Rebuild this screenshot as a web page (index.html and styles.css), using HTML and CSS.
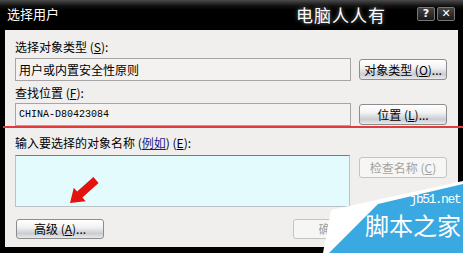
FILE: index.html
```html
<!DOCTYPE html>
<html lang="zh-CN">
<head>
<meta charset="UTF-8">
<title>选择用户</title>
<link rel="stylesheet" href="styles.css">
</head>
<body>

<div class="window">
  <div class="titlebar">
    <span class="title">选择用户</span>
    <span class="brand">电脑人人有</span>
    <span class="tbtn">?</span>
    <span class="tbtn">✕</span>
  </div>

  <div class="panel">
    <div class="label">选择对象类型 (<u>S</u>):</div>
    <div class="row">
      <div class="field">用户或内置安全性原则</div>
      <button class="btn">对象类型 (<u>O</u>)...</button>
    </div>

    <div class="label label-2">查找位置 (<u>F</u>):</div>
    <div class="row">
      <div class="field mono">CHINA-D80423084</div>
      <button class="btn">位置 (<u>L</u>)...</button>
    </div>

    <div class="label label-3">输入要选择的对象名称 (<a href="#">例如</a>) (<u>E</u>):</div>
    <div class="row row-top">
      <div class="names"></div>
      <button class="btn off">检查名称 (<u>C</u>)</button>
    </div>

    <div class="footer">
      <button class="btn">高级 (<u>A</u>)...</button>
      <div class="spacer"></div>
      <button class="btn off small">确定</button>
      <!-- cancel button sits under the watermark, its label never shows -->
      <button class="btn off small"></button>
    </div>
  </div>

  <!-- annotations drawn over the screenshot -->
  <div class="redline"></div>
  <svg class="arrow" width="40" height="36" viewBox="0 0 40 36">
    <polygon points="8,31 23.7,29.2 20.4,25.4 36.6,11 31.4,5 15.1,19.4 11.8,15.7" fill="#e4120f"/>
  </svg>
  <div class="stamp">
    <svg width="145" height="73" viewBox="0 0 145 73">
      <polygon points="5,73 13,30 145,1 145,73" fill="#fff"/>
      <polygon points="11,73 60,24 145,4 145,73" fill="#3aa9e2"/>
    </svg>
    <span class="stamp-url">jb51.net</span>
    <span class="stamp-name">脚本之家</span>
  </div>
</div>

</body>
</html>
```

FILE: styles.css
```css
* { margin: 0; padding: 0; box-sizing: border-box; }
body { background: #000; font-family: "Noto Sans CJK SC", "Noto Sans", sans-serif; font-size: 12px; color: #000; }

.window { position: relative; width: 463px; height: 253px; display: flex; flex-direction: column; padding-bottom: 6px; overflow: hidden;
  background: linear-gradient(180deg, #4a4a4a 0, #111 6px, #000 10px); }

.titlebar { height: 30px; display: flex; align-items: center; padding: 0 8px 2px 7px; color: #fff; }
.title { font-size: 13px; line-height: 16px; }
.brand { margin-left: auto; margin-right: 29px; font-size: 17px; letter-spacing: 1px; text-shadow: 0 0 4px #888; }
.tbtn { width: 18px; height: 14px; margin-left: 2px; border: 1px solid #777; border-radius: 2px; background: linear-gradient(#444, #1a1a1a);
  font: bold 11px/12px "DejaVu Sans", sans-serif; text-align: center; color: #fff; }

.panel { flex: 1; margin: 0 5px; background: #f0efed; padding: 9px 11px 0 10px; }
.label { line-height: 16px; margin-bottom: 3px; }
.label-2 { margin-top: 4px; margin-bottom: 2px; }
.label-3 { margin-top: 9px; margin-bottom: 4px; }
.label a { color: #1a1a8c; }

.row { display: grid; grid-template-columns: 336px 88px; column-gap: 8px; align-items: center; }
.row-top { align-items: start; }
.field { height: 23px; border: 1px solid #a5a5a5; background: #f3f2f0; padding-left: 3px; line-height: 21px; white-space: nowrap; }
.mono { font-family: "Liberation Mono", monospace; font-size: 10px; }
.names { height: 52px; border: 1px solid #b9c3c6; border-top-color: #7a7a7a; background: #e4fbfd; width: 335px; }

.btn { height: 21px; border: 1px solid #8d8d8d; border-radius: 3px; font: 12px/19px "Noto Sans CJK SC", sans-serif; color: #000;
  background: linear-gradient(#ffffff 0, #f3f3f3 40%, #c9ccd2 75%, #e9e9ea 100%); }
.btn.off { color: #a2a2a2; border-color: #c4c4c4; background: #f6f6f5; }
.row-top .btn { margin-top: 2px; }

.footer { display: flex; align-items: center; gap: 8px; margin-top: 12px; padding-left: 1px; }
.footer .btn { width: 88px; height: 20px; line-height: 18px; }
.footer .btn.small { width: 75px; margin-left: -4px; }
.spacer { flex: 1; }

.redline { position: absolute; left: 3px; right: 0; top: 126px; height: 2px; background: #e23b3b; }
.arrow { position: absolute; left: 62px; top: 172px; }
.stamp { position: absolute; right: 0; bottom: 0; width: 145px; height: 73px; }
.stamp svg { position: absolute; left: 0; top: 0; }
.stamp-url { position: absolute; right: 3px; top: 12px; font: 13px/16px "Liberation Mono", monospace; letter-spacing: -1.5px; color: #fff; }
.stamp-name { position: absolute; right: 2px; top: 28px; font-size: 24px; line-height: 34px; color: #fff; }
```
